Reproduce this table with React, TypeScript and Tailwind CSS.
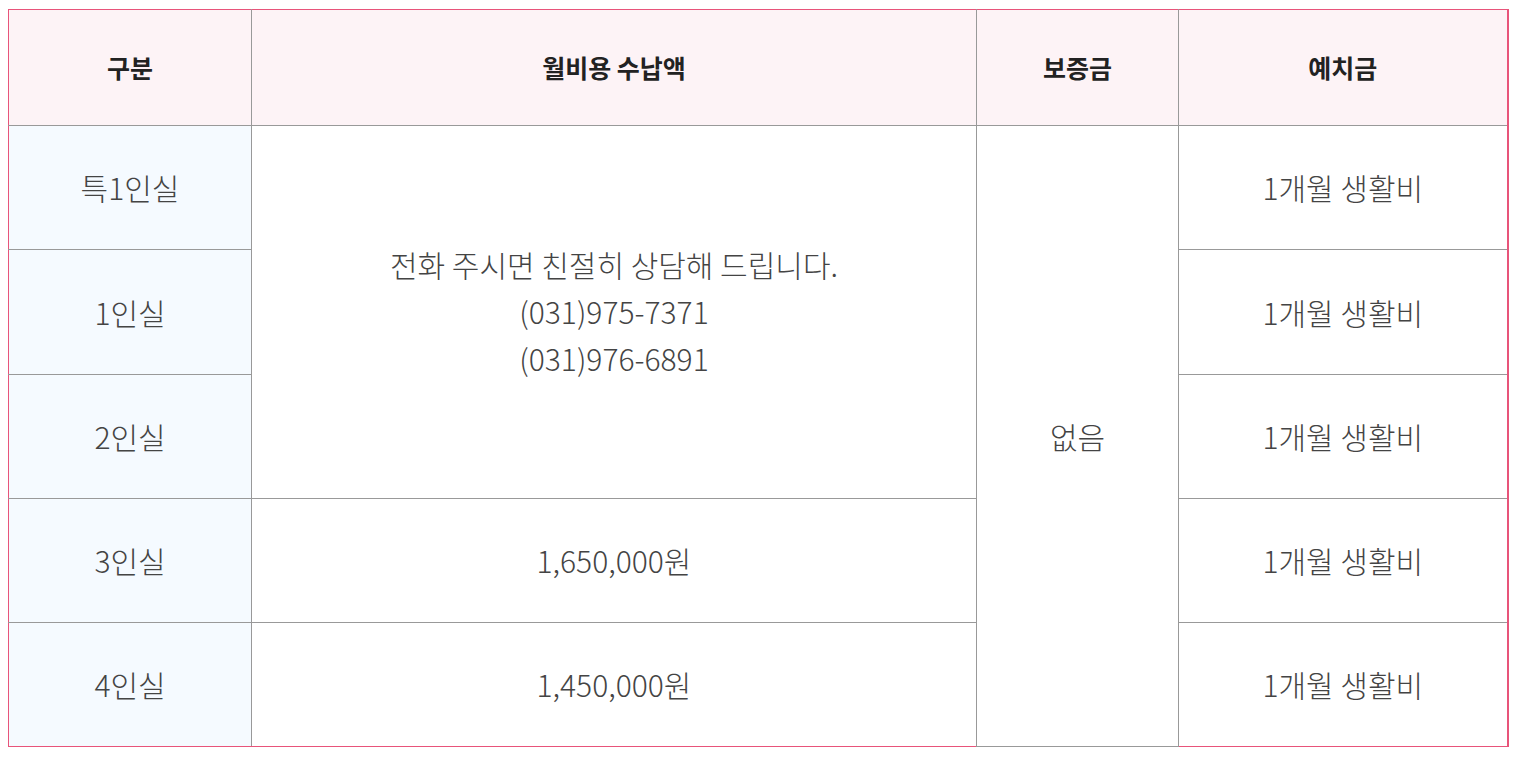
import React from "react";

const font = { fontFamily: '"Noto Sans CJK KR", "Noto Sans", sans-serif' };

export default function App() {
  const th = "border border-[#999] bg-[#fdf3f6] text-[25px] font-bold text-[#222] text-center align-middle";
  const tdFirst = "border border-[#999] bg-[#f5faff] text-[30px] font-light text-[#444] text-center align-middle";
  const td = "border border-[#999] bg-white text-[30px] font-light text-[#444] text-center align-middle";
  return (
    <div className="bg-white w-[1517px] h-[762px] pl-[8px] pt-[9px]" style={font}>
      <table className="table-fixed border-collapse w-[1499px] border border-[#e8547a] [&_tr>*:first-child]:border-l-[#e8547a] [&_tr>*:last-child]:border-r-[#e8547a] [&_tr>*:last-child]:border-r-2 [&_thead_th]:border-t-[#e8547a] [&_tbody>tr:last-child>td]:border-b-[#e8547a]">
        <colgroup>
          <col className="w-[243px]" />
          <col className="w-[725px]" />
          <col className="w-[202px]" />
          <col className="w-[329px]" />
        </colgroup>
        <thead>
          <tr className="h-[116px]">
            <th className={th}>구분</th>
            <th className={th}>월비용 수납액</th>
            <th className={th}>보증금</th>
            <th className={th}>예치금</th>
          </tr>
        </thead>
        <tbody>
          <tr className="h-[124px]">
            <td className={tdFirst}>특1인실</td>
            <td className={td + " leading-[47px]"} rowSpan={3}>
              <div className="-mt-[2px]">
                전화 주시면 친절히 상담해 드립니다.
                <br />
                (031)975-7371
                <br />
                (031)976-6891
              </div>
            </td>
            <td className={td} rowSpan={5}>없음</td>
            <td className={td}>1개월 생활비</td>
          </tr>
          <tr className="h-[125px]">
            <td className={tdFirst}>1인실</td>
            <td className={td}>1개월 생활비</td>
          </tr>
          <tr className="h-[124px]">
            <td className={tdFirst}>2인실</td>
            <td className={td}>1개월 생활비</td>
          </tr>
          <tr className="h-[124px]">
            <td className={tdFirst}>3인실</td>
            <td className={td}>1,650,000원</td>
            <td className={td}>1개월 생활비</td>
          </tr>
          <tr className="h-[124px]">
            <td className={tdFirst}>4인실</td>
            <td className={td}>1,450,000원</td>
            <td className={td}>1개월 생활비</td>
          </tr>
        </tbody>
      </table>
    </div>
  );
}
